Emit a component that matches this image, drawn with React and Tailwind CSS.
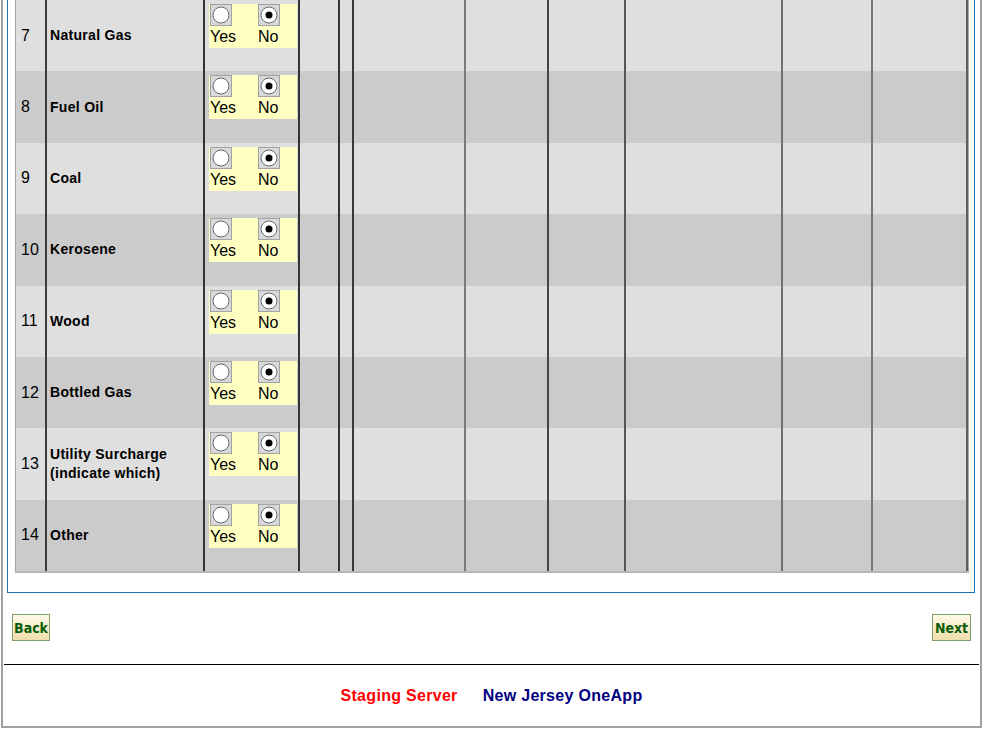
import React from "react";

const rows = [
  { n: 7, label: "Natural Gas" },
  { n: 8, label: "Fuel Oil" },
  { n: 9, label: "Coal" },
  { n: 10, label: "Kerosene" },
  { n: 11, label: "Wood" },
  { n: 12, label: "Bottled Gas" },
  { n: 13, label: "Utility Surcharge (indicate which)" },
  { n: 14, label: "Other" },
];

// empty trailing cells, each with its own divider shade
const emptyCells = [
  "border-r-2 border-[#3a3a3a]",
  "border-r-2 border-[#7a7a7a]",
  "border-r-2 border-[#444]",
  "border-r-2 border-[#555]",
  "border-r-2 border-[#707070]",
  "border-r-2 border-[#767676]",
  "border-r-2 border-[#5e5e5e]",
  "",
];

const Radio = ({ checked }) => (
  <svg width="22" height="22" viewBox="0 0 22 22" className="block">
    <rect x="0.5" y="0.5" width="21" height="21" fill="#d8d8d8" stroke="#a2a2a2" />
    <circle cx="11" cy="11" r="8" fill="#fff" stroke="#6a6a6a" />
    {checked && <circle cx="11" cy="11" r="3.5" fill="#000" />}
  </svg>
);

const YesNo = () => (
  <div className="flex w-[88px] h-[44px] bg-[#ffffc2] text-[16px]">
    <div className="w-[48px] pl-px">
      <Radio />
      <div className="mt-[2px] leading-[18px]">Yes</div>
    </div>
    <div className="pl-px">
      <Radio checked />
      <div className="mt-[2px] leading-[18px]">No</div>
    </div>
  </div>
);

const Row = ({ n, label, i }) => (
  <div
    className={`grid grid-rows-1 grid-cols-[31px_158px_95px_40px_14px_112px_83px_77px_157px_90px_95px] h-[71.375px] ${
      i % 2 === 0 ? "bg-[#dfdfdf]" : "bg-[#cbcbcb]"
    }`}
  >
    <div className="flex items-center pl-[5px] border-r-2 border-[#3c3c3c] text-[16px]">{n}</div>
    <div className="flex items-center pl-[3px] pr-1 border-r-2 border-[#333] font-bold text-[14px] leading-[19px] tracking-[0.3px]">
      {label}
    </div>
    <div className="pl-[4px] pt-[4px] border-r-2 border-[#333]">
      <YesNo />
    </div>
    <div className="border-r-2 border-[#333]" />
    {emptyCells.map((c, k) => (
      <div key={k} className={c} />
    ))}
  </div>
);

const NavButton = ({ children, w }) => (
  <button
    className={`${w} h-[27px] border border-[#7aa26a] bg-gradient-to-b from-[#fffbe9] to-[#efdeac] text-[#0a5c0a] font-bold text-[14px] leading-none text-center`}
    style={{ fontFamily: '"DejaVu Sans Condensed", "DejaVu Sans", sans-serif' }}
  >
    {children}
  </button>
);

export default function App() {
  return (
    <div className="w-[987px] h-[729px] bg-white font-['Liberation_Sans',Arial,sans-serif] text-black">
      <div className="ml-px w-[981px] border-x-2 border-b-2 border-[#a0a0a0]">
        <div className="ml-[4px] mr-[5px] border-x border-b border-[#1f74b8] pl-[7px] pr-[5px] pb-[19px]">
          <div className="border-x border-b-2 border-x-[#a4a4a4] border-b-[#b6b6b6]">
            {rows.map((r, i) => (
              <Row key={r.n} {...r} i={i} />
            ))}
          </div>
        </div>

        <div className="flex justify-between mt-[21px] px-[9px]">
          <NavButton w="w-[38px]">Back</NavButton>
          <NavButton w="w-[39px]">Next</NavButton>
        </div>

        <div className="mx-px mt-[23px] border-t border-black" />

        <div className="flex justify-center gap-[25px] mt-[21px] pb-[20px] font-bold text-[16px] leading-[20px] tracking-[0.3px]">
          <span className="text-[#ff0000]">Staging Server</span>
          <span className="text-[#000080]">New Jersey OneApp</span>
        </div>
      </div>
    </div>
  );
}
